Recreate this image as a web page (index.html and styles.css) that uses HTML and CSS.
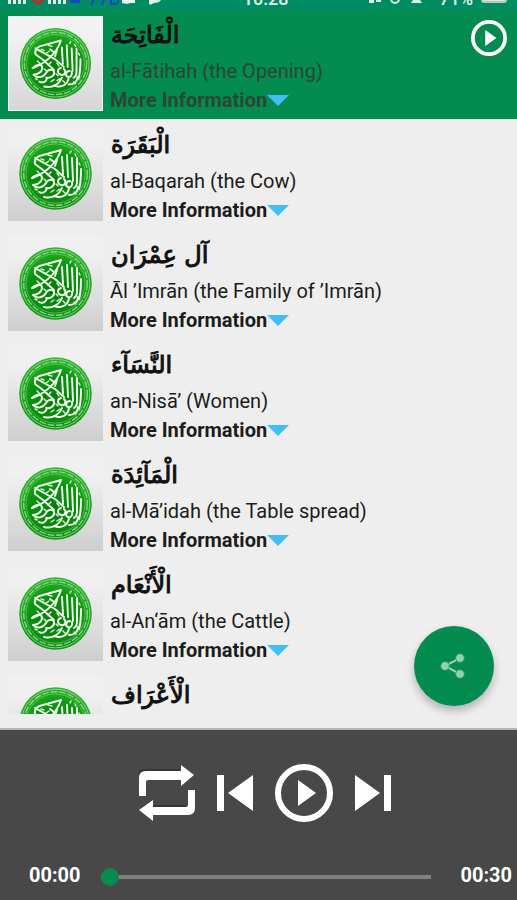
FILE: index.html
```html
<!DOCTYPE html>
<html lang="en">
<head>
<meta charset="utf-8">
<meta name="viewport" content="width=device-width, initial-scale=1">
<title>Quran Player</title>
<link rel="stylesheet" href="styles.css">
</head>
<body>
<svg class="defs" aria-hidden="true">
  <defs>
    <radialGradient id="green" cx="50%" cy="60%" r="60%">
      <stop offset="0" stop-color="#067c0a"/>
      <stop offset="0.6" stop-color="#0b920f"/>
      <stop offset="1" stop-color="#2bb92b"/>
    </radialGradient>
    <symbol id="emblem" viewBox="0 0 95 95">
      <circle cx="47.500" cy="47.500" r="36.300" fill="url(#green)"/>
      <g fill="none" stroke="#a5dba0">
        <circle cx="47.500" cy="47.500" r="34.300" stroke-width=".8"/>
        <circle cx="47.500" cy="47.500" r="31.800" stroke-width="1.500" stroke-dasharray="7 1.500" opacity=".8"/>
        <circle cx="47.500" cy="47.500" r="29.600" stroke-width=".6" opacity=".8"/>
      </g>
      <g fill="none" stroke="#f4fff0" stroke-width="1.900" stroke-linecap="round" stroke-linejoin="round">
        <path d="M27 38c-1-5 2-8 8-9l18-5M27 32l20 11 9 8M53 24c-4 12-14 22-28 28M27 38l8 6M35 44l11 10"/>
        <path d="M24 52c5-5 10-4 10 0s-5 7-9 7M25 59c4 4 10 3 13-2 2-4 7-4 8-1 1 4-4 7-8 6M31 66c4 2 7 0 8-4M36 71c8 2 15-2 18-9"/>
        <path d="M46 70c8 3 14-1 15-8M61 69c5 0 9-3 9-8M53 52c-4 1-4 6 0 7s6-3 3-6M62 55c-4 0-5 5-2 6s5-2 4-5"/>
        <path d="M54 31l1 17M59 29l1 22M64 32l1 23M69 32v22c0 4 0 6-3 8M73 43c0 9 0 14-2 20M49 34l-2 6M42 33l4 3"/>
      </g>
      <g fill="none" stroke="#dff5d9" stroke-width="1.400" stroke-linecap="round">
        <path d="M33 33l3 1M40 29l4 1M38 37l3-2M29 45l3 3M40 49l3-3M49 47l2 3M62 27l1-2M67 28l1 2M27 63l2 1M43 66l3-2M49 65l3-2M55 65l2 2M66 66l2 2M48 58l2 2M57 57l1 2M71 37l1 2M36 53l2 2"/>
      </g>
    </symbol>
    <symbol id="play-ring" viewBox="0 0 58 58">
      <circle cx="29" cy="29" r="26" fill="none" stroke="#fff" stroke-width="6"/>
      <path d="M23 16v26l18-13z" fill="#fff"/>
    </symbol>
  </defs>
</svg>

<div class="app">
  <header class="status">
    <svg class="signal" viewBox="0 0 72 10" aria-hidden="true">
      <path d="M0 0h3v4H0zM5 0h3v4H5zM10 0h3v4h-3zM15 0h3v4h-3zM40 0h3v4h-3zM45 0h3v4h-3zM50 0h3v4h-3zM55 0h3v4h-3z" fill="#dff0e8"/>
      <circle cx="30" cy="-2" r="5" fill="none" stroke="#c22a2a" stroke-width="3"/>
      <path d="M62 0h10v3H62z" fill="#1747c4"/>
    </svg>
    <span class="net">77B</span>
    <svg class="msg" viewBox="0 0 40 10" aria-hidden="true"><path d="M0 0h13v3H8l-3 1-5-1zM27 0h12q-2 3-7 3l-4 2-1-2z" fill="#e9f5ef"/></svg>
    <span class="clock">10:28</span>
    <svg class="sys" viewBox="0 0 60 10" aria-hidden="true"><path d="M0 0h5v3H0zM7 0h5v2H7zM44 0h7l2 3H42z" fill="#e4f3ec"/><circle cx="26" cy="-1" r="4" fill="none" stroke="#d5ecdf" stroke-width="2"/></svg>
    <span class="pct">71%</span>
    <span class="battery"></span>
  </header>

  <main class="list-area">
    <ul class="list">
      <li class="row active">
        <svg class="thumb" role="img" aria-label="Quran"><use href="#emblem"/></svg>
        <div class="info"><h2 lang="ar">الْفَاتِحَة</h2><p>al-Fātihah (the Opening)</p><button class="more">More Information<i></i></button></div>
        <button class="row-play" aria-label="Play"><svg viewBox="0 0 58 58"><use href="#play-ring"/></svg></button>
      </li>
      <li class="row">
        <svg class="thumb" role="img" aria-label="Quran"><use href="#emblem"/></svg>
        <div class="info"><h2 lang="ar">الْبَقَرَة</h2><p>al-Baqarah (the Cow)</p><button class="more">More Information<i></i></button></div>
      </li>
      <li class="row">
        <svg class="thumb" role="img" aria-label="Quran"><use href="#emblem"/></svg>
        <div class="info"><h2 lang="ar">آل عِمْرَان</h2><p>Āl ’Imrān (the Family of ’Imrān)</p><button class="more">More Information<i></i></button></div>
      </li>
      <li class="row">
        <svg class="thumb" role="img" aria-label="Quran"><use href="#emblem"/></svg>
        <div class="info"><h2 lang="ar">النَّسَآء</h2><p>an-Nisā’ (Women)</p><button class="more">More Information<i></i></button></div>
      </li>
      <li class="row">
        <svg class="thumb" role="img" aria-label="Quran"><use href="#emblem"/></svg>
        <div class="info"><h2 lang="ar">الْمَآئِدَة</h2><p>al-Mā’idah (the Table spread)</p><button class="more">More Information<i></i></button></div>
      </li>
      <li class="row">
        <svg class="thumb" role="img" aria-label="Quran"><use href="#emblem"/></svg>
        <div class="info"><h2 lang="ar">الْأَنْعَام</h2><p>al-An‘ām (the Cattle)</p><button class="more">More Information<i></i></button></div>
      </li>
      <li class="row">
        <svg class="thumb" role="img" aria-label="Quran"><use href="#emblem"/></svg>
        <div class="info"><h2 lang="ar">الْأَعْرَاف</h2></div>
      </li>
    </ul>
    <button class="fab" aria-label="Share">
      <svg viewBox="0 0 28 28"><path d="M20 6L5 14l15 8" fill="none" stroke="#8fd3ae" stroke-width="2"/><g fill="#8fd3ae" stroke="#3c8a60" stroke-width=".8"><circle cx="20" cy="6" r="4.300"/><circle cx="5" cy="14" r="4.300"/><circle cx="20" cy="22" r="4.300"/></g></svg>
    </button>
  </main>

  <footer class="player">
    <div class="controls">
      <button aria-label="Repeat"><svg class="repeat" viewBox="0 0 56 56"><g fill="none" stroke="#222" stroke-width="1" transform="translate(-1 -1)"><path d="M0 31V13q0-7 7-7h35M8 15h34M14 42h34M14 50h35q7 0 7-7"/></g><path d="M0 31V13q0-7 7-7h35V0l13 10-13 11v-6H9q-2 0-2 2v14zM56 25v18q0 7-7 7H14v6L0 45l14-10v7h33q2 0 2-2V25z" fill="#fff"/></svg></button>
      <button aria-label="Previous"><svg class="skip" viewBox="0 0 36 36"><path d="M0 0h7v36H0zM36 0v36L11 18z" fill="#fff"/></svg></button>
      <button aria-label="Play"><svg class="play" viewBox="0 0 58 58"><use href="#play-ring"/></svg></button>
      <button aria-label="Next"><svg class="skip" viewBox="0 0 36 36"><path d="M29 0h7v36h-7zM0 0v36l25-18z" fill="#fff"/></svg></button>
    </div>
    <div class="progress">
      <span>00:00</span>
      <input type="range" min="0" max="30" value="0" aria-label="Seek">
      <span>00:30</span>
    </div>
  </footer>
</div>
</body>
</html>
```

FILE: styles.css
```css
* { box-sizing: border-box; }
body { margin: 0; background: #eee; font-family: Roboto, "Noto Sans", sans-serif; color: #1c1c1c; }
button { display: block; margin: 0; padding: 0; border: 0; background: none; color: inherit; font: inherit; cursor: pointer; }
svg { display: block; }
h2, p, ul { margin: 0; padding: 0; }
.defs { position: absolute; width: 0; height: 0; }

.app { display: flex; flex-direction: column; height: 100vh; }

.status { flex: none; display: flex; align-items: flex-end; height: 10px; padding: 0 10px 0 8px; overflow: hidden; background: #008c62; color: #e4f3ec; font-size: 18px; font-weight: 500; line-height: 22px; white-space: nowrap; }
.signal { flex: none; width: 72px; height: 10px; }
.net { margin: 0 2px 0 8px; color: #1747c4; }
.msg { flex: none; width: 40px; height: 10px; }
.clock { margin: 0 auto; }
.sys { flex: none; width: 60px; height: 10px; }
.pct { margin: 0 8px 0 10px; }
.battery { flex: none; width: 26px; height: 12px; margin-bottom: 7px; border: 2px solid #b9c9b8; border-radius: 3px; background: #dfe3d8; }

.list-area { position: relative; flex: 1; min-height: 0; padding-bottom: 14px; border-bottom: 2px solid #b5b5b5; }
.list { height: 100%; overflow: hidden; list-style: none; }
.row { display: flex; align-items: flex-start; gap: 7px; height: 110px; padding: 6px 8px 0; }
.row.active { border-bottom: 1px solid #d4eadd; background: #048c50; color: #2a4637; }
.thumb { flex: none; width: 95px; height: 95px; background: linear-gradient(#f0f0f0 20%, #cecece); }
.active .thumb { border: 1px solid #f4f4f4; background: linear-gradient(#f2f2f2 20%, #d6d6d6); }
.info { flex: 1; min-width: 0; }
.info h2 { height: 40px; padding-left: 1px; color: #111; font-family: "DejaVu Sans", sans-serif; font-size: 24px; font-weight: 400; line-height: 38px; -webkit-text-stroke: 1px #111; }
.info p { font-size: 20px; line-height: 30px; }
.more { display: flex; align-items: center; font-size: 20px; font-weight: 700; line-height: 28px; }
.more i { border: 11px solid transparent; border-top-color: #43bdf8; border-bottom-width: 0; }
.row-play svg { width: 36px; height: 36px; }
.row-play { margin: 4px 2px 0 0; }

.fab { position: absolute; right: 23px; bottom: 22px; display: grid; place-items: center; width: 80px; height: 80px; border-radius: 50%; background: #048c50; box-shadow: 0 5px 8px rgba(0, 0, 0, .25); }
.fab svg { width: 28px; height: 28px; }

.player { flex: none; padding: 34px 5px 10px 17px; background: #484848; color: #fff; }
.controls { display: flex; justify-content: center; align-items: center; gap: 22px; }
.repeat { width: 56px; height: 56px; }
.skip { width: 36px; height: 36px; }
.play { width: 58px; height: 58px; }
.progress { display: flex; align-items: center; margin-top: 38px; padding-left: 12px; font-size: 20px; font-weight: 700; line-height: 30px; }
.progress input { flex: 1; min-width: 0; height: 18px; margin: 4px 29px 0 20px; appearance: none; background: none; }
.progress input::-webkit-slider-runnable-track { height: 4px; background: #808080; }
.progress input::-webkit-slider-thumb { appearance: none; width: 18px; height: 18px; margin-top: -7px; border-radius: 50%; background: #068c50; }
```
